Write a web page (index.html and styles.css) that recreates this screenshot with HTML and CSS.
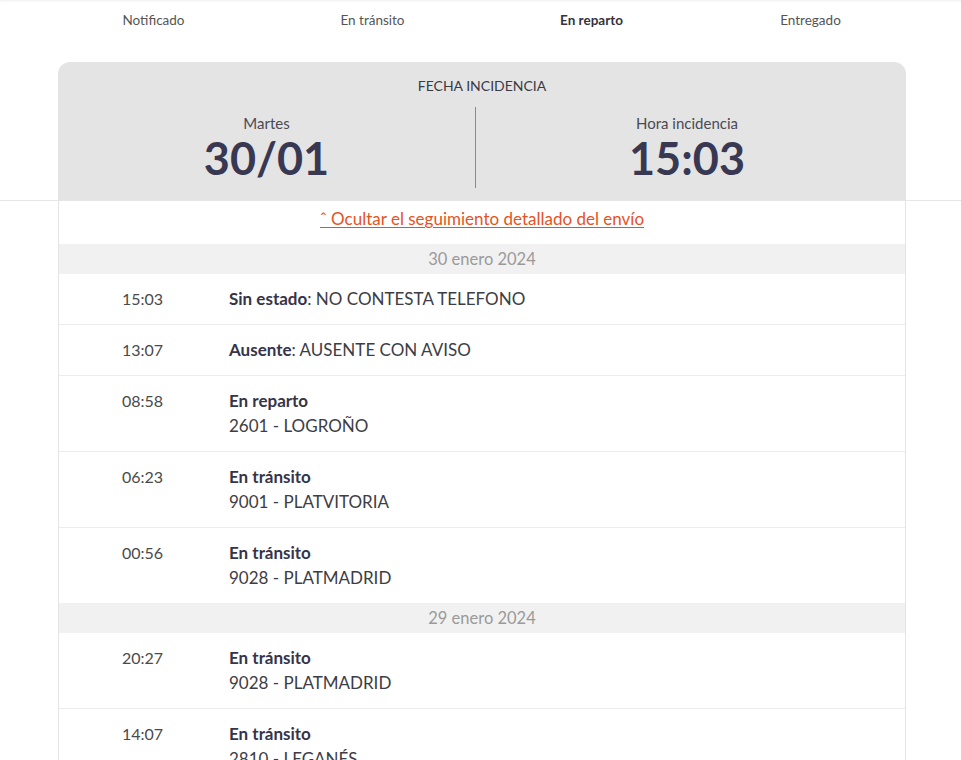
FILE: index.html
```html
<!DOCTYPE html>
<html lang="es">
<head>
<meta charset="utf-8">
<title>Seguimiento</title>
<link rel="stylesheet" href="styles.css">
</head>
<body>
<div class="top">
  <nav class="stepper">
    <div class="step">Notificado</div>
    <div class="step">En tránsito</div>
    <div class="step active">En reparto</div>
    <div class="step">Entregado</div>
  </nav>
  <section class="incident">
    <div class="inc-title">FECHA INCIDENCIA</div>
    <div class="inc-cols">
      <div class="inc-col">
        <div class="inc-label">Martes</div>
        <div class="inc-value">30/01</div>
      </div>
      <div class="inc-col sep">
        <div class="inc-label">Hora incidencia</div>
        <div class="inc-value">15:03</div>
      </div>
    </div>
  </section>
</div>
<div class="body">
  <div class="toggle"><a href="#">ˆ Ocultar el seguimiento detallado del envío</a></div>
  <div class="day-band">30 enero 2024</div>
  <div class="row"><div class="time">15:03</div><div class="desc"><b>Sin estado</b>: NO CONTESTA TELEFONO</div></div>
  <div class="row"><div class="time">13:07</div><div class="desc"><b>Ausente</b>: AUSENTE CON AVISO</div></div>
  <div class="row"><div class="time">08:58</div><div class="desc"><b>En reparto</b><br>2601 - LOGROÑO</div></div>
  <div class="row"><div class="time">06:23</div><div class="desc"><b>En tránsito</b><br>9001 - PLATVITORIA</div></div>
  <div class="row last"><div class="time">00:56</div><div class="desc"><b>En tránsito</b><br>9028 - PLATMADRID</div></div>
  <div class="day-band">29 enero 2024</div>
  <div class="row"><div class="time">20:27</div><div class="desc"><b>En tránsito</b><br>9028 - PLATMADRID</div></div>
  <div class="row"><div class="time">14:07</div><div class="desc"><b>En tránsito</b><br>2810 - LEGANÉS</div></div>
</div>
</body>
</html>
```
FILE: styles.css
```css
html, body {
  margin: 0;
  padding: 0;
  background: #fff;
}
body {
  font-family: Lato, "Open Sans", sans-serif;
  color: #3f3f4a;
  overflow: hidden;
}
.top {
  border-bottom: 1px solid #e6e6e6;
  box-shadow: inset 0 3px 3px -2px rgba(0,0,0,0.07);
}
.stepper {
  display: flex;
  width: 876px;
  margin: 0 0 0 44px;
  padding-top: 12px;
}
.step {
  flex: 1;
  text-align: center;
  font-size: 13.5px;
  line-height: 16px;
  color: #555;
}
.step.active {
  font-weight: 700;
  color: #333340;
}
.incident {
  width: 848px;
  margin: 34px 0 0 58px;
  background: #e4e4e4;
  border-radius: 12px 12px 0 0;
  padding: 16px 0 12px;
  text-align: center;
}
.inc-title {
  font-size: 14px;
  line-height: 16px;
  color: #3a3a44;
}
.inc-cols {
  display: flex;
  margin-top: 13px;
}
.inc-col {
  flex: 0 0 417px;
  padding: 8px 0 3px;
  text-align: center;
}
.inc-col.sep {
  flex: 1 1 auto;
  padding-right: 8px;
  border-left: 1px solid #8a8a8a;
}
.inc-label {
  font-size: 15px;
  line-height: 16px;
  color: #4a4a55;
}
.inc-value {
  font-size: 45px;
  line-height: 54px;
  font-weight: 700;
  color: #393852;
}
.body {
  width: 846px;
  margin-left: 58px;
  border-left: 1px solid #e4e4e4;
  border-right: 1px solid #e4e4e4;
}
.toggle {
  text-align: center;
  padding: 8px 0 0;
  height: 35px;
  font-size: 17px;
  line-height: 20px;
}
.toggle a {
  color: #e5531f;
  text-decoration: underline;
  text-underline-offset: 2px;
}
.day-band {
  background: #f1f1f1;
  height: 30px;
  line-height: 30px;
  text-align: center;
  font-size: 16.5px;
  color: #9a9a9a;
}
.row {
  display: flex;
  padding: 12px 0 13px;
  border-bottom: 1px solid #ececec;
  font-size: 17px;
  line-height: 25px;
}
.row.last {
  border-bottom: none;
}
.time {
  width: 107px;
  padding-left: 63px;
  font-size: 16px;
  color: #4a4a4a;
}
.desc {
  color: #3d3d45;
}
.desc b {
  color: #35344a;
  font-weight: 700;
}
```
